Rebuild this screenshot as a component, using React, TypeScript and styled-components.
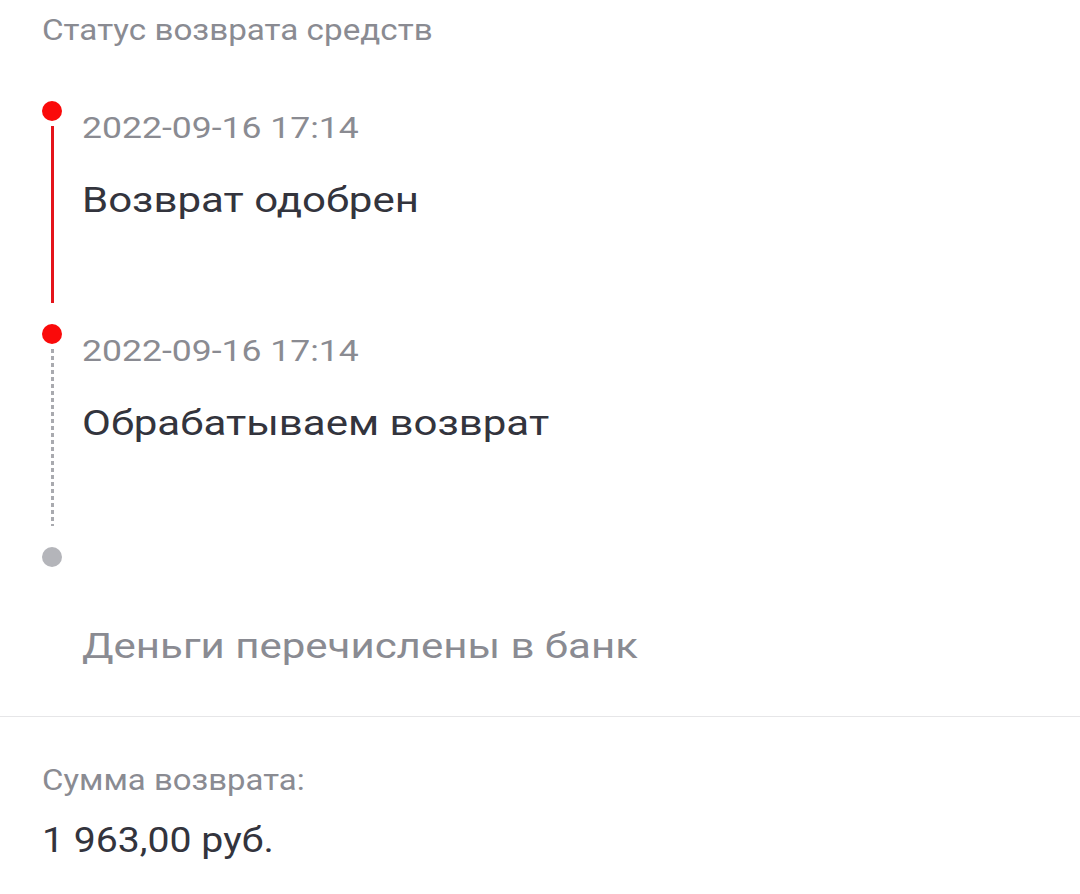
import React from "react";
import styled, { createGlobalStyle } from "styled-components";

const Global = createGlobalStyle`
  html, body { margin: 0; padding: 0; background: #ffffff; }
  body { font-family: Roboto, "Noto Sans", Arial, sans-serif; }
`;

const Page = styled.div`
  width: 1080px;
  min-height: 894px;
  background: #fff;
  display: flex;
  flex-direction: column;
  overflow: hidden;
`;

const Section = styled.section`
  padding: 0 0 0 42px;
  display: flex;
  flex-direction: column;
`;

const Wide = styled.span<{ $k: number }>`
  display: inline-block;
  transform: scaleX(${(p) => p.$k});
  transform-origin: 0 50%;
  white-space: nowrap;
`;

const Title = styled.div`
  font-size: 29px;
  line-height: 32px;
  color: #8a8b92;
  padding-top: 14px;
`;

const Timeline = styled.div`
  display: flex;
  flex-direction: column;
  margin-top: 55px;
`;

const Item = styled.div<{ $last?: boolean }>`
  display: grid;
  grid-template-columns: 20px 1fr;
  column-gap: 20px;
  min-height: ${(p) => (p.$last ? "auto" : "223px")};
`;

const Rail = styled.div`
  display: flex;
  flex-direction: column;
  align-items: center;
`;

const Dot = styled.div<{ $active: boolean }>`
  width: 20px;
  height: 20px;
  border-radius: 50%;
  background: ${(p) => (p.$active ? "#fa0a0a" : "#b4b5ba")};
  flex: none;
`;

const Line = styled.div<{ $dashed: boolean }>`
  width: 3px;
  height: 177px;
  margin-top: 5px;
  background: ${(p) =>
    p.$dashed
      ? "repeating-linear-gradient(to bottom, #a9aaaf 0 4px, transparent 4px 7px)"
      : "#e4141b"};
`;

const Body = styled.div`
  padding-top: 7px;
  display: flex;
  flex-direction: column;
`;

const DateText = styled.div`
  font-size: 30px;
  line-height: 40px;
  height: 40px;
  color: #8a8b92;
`;

const StatusText = styled.div<{ $muted: boolean }>`
  margin-top: 31px;
  font-size: 35px;
  line-height: 44px;
  color: ${(p) => (p.$muted ? "#8a8b92" : "#33343d")};
`;

const Divider = styled.div`
  height: 1px;
  background: #e6e6e8;
  margin-top: 47px;
`;

const SumSection = styled.section`
  padding: 45px 0 0 42px;
  display: flex;
  flex-direction: column;
`;

const SumLabel = styled.div`
  font-size: 29px;
  line-height: 36px;
  color: #8a8b92;
`;

const SumValue = styled.div`
  font-size: 35px;
  line-height: 44px;
  margin-top: 21px;
  color: #33343d;
`;

type Step = { date?: string; text: string; done: boolean };

const steps: Step[] = [
  { date: "2022-09-16 17:14", text: "Возврат одобрен", done: true },
  { date: "2022-09-16 17:14", text: "Обрабатываем возврат", done: true },
  { text: "Деньги перечислены в банк", done: false },
];

export default function App() {
  return (
    <Page>
      <Global />
      <Section>
        <Title>
          <Wide $k={1.145}>Статус возврата средств</Wide>
        </Title>
        <Timeline>
          {steps.map((s, i) => {
            const last = i === steps.length - 1;
            const nextDone = !last && steps[i + 1].done;
            return (
              <Item key={i} $last={last}>
                <Rail>
                  <Dot $active={s.done} />
                  {!last && <Line $dashed={!nextDone} />}
                </Rail>
                <Body>
                  <DateText>
                    <Wide $k={1.185}>{s.date ?? "\u00a0"}</Wide>
                  </DateText>
                  <StatusText $muted={!s.done}>
                    <Wide $k={1.2}>{s.text}</Wide>
                  </StatusText>
                </Body>
              </Item>
            );
          })}
        </Timeline>
      </Section>
      <Divider />
      <SumSection>
        <SumLabel>
          <Wide $k={1.135}>Сумма возврата:</Wide>
        </SumLabel>
        <SumValue>
          <Wide $k={1.12}>1 963,00 руб.</Wide>
        </SumValue>
      </SumSection>
    </Page>
  );
}
